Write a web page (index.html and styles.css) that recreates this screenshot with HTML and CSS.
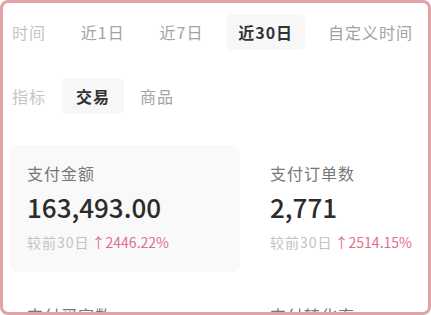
FILE: index.html
```html
<!DOCTYPE html>
<html lang="zh-CN">
<head>
  <meta charset="UTF-8" />
  <meta name="viewport" content="width=device-width, initial-scale=1.0"/>
  <title>交易数据</title>
  <link rel="stylesheet" href="styles.css">
</head>
<body>
  <div class="frame">
    <div class="tabs time-tabs">
      <span class="tab-label">时间</span>
      <span class="tab">近1日</span>
      <span class="tab">近7日</span>
      <span class="tab active">近30日</span>
      <span class="tab">自定义时间</span>
    </div>

    <div class="tabs metric-tabs">
      <span class="tab-label">指标</span>
      <span class="tab active">交易</span>
      <span class="tab">商品</span>
    </div>

    <div class="cards">
      <div class="card selected">
        <div class="card-title">支付金额</div>
        <div class="card-value">163,493.00</div>
        <div class="card-compare">较前30日<span class="up">↑2446.22%</span></div>
      </div>
      <div class="card">
        <div class="card-title">支付订单数</div>
        <div class="card-value">2,771</div>
        <div class="card-compare">较前30日<span class="up">↑2514.15%</span></div>
      </div>
      <div class="card">
        <div class="card-title">支付买家数</div>
        <div class="card-value">2,604</div>
        <div class="card-compare">较前30日<span class="up">↑2380.95%</span></div>
      </div>
      <div class="card">
        <div class="card-title">支付转化率</div>
        <div class="card-value">12.36%</div>
        <div class="card-compare">较前30日<span class="up">↑8.12%</span></div>
      </div>
    </div>
  </div>
</body>
</html>
```

FILE: styles.css
```css
body {
  margin: 0;
  font-family: "Noto Sans CJK SC", "Noto Sans", sans-serif;
  background: #fff;
}
.frame {
  box-sizing: border-box;
  width: 431px;
  height: 315px;
  border: 3px solid #e2a3a6;
  border-radius: 8px;
  overflow: hidden;
  padding: 12px 15px 0 9px;
}
.tabs {
  display: flex;
  align-items: center;
  height: 34px;
  font-size: 16px;
  letter-spacing: 1px;
}
.time-tabs {
  justify-content: space-between;
}
.metric-tabs {
  gap: 30px;
  margin-top: 30px;
}
.tab-label {
  color: #c4c4c4;
}
.tab {
  color: #a3a3a3;
}
.tab.active {
  color: #333;
  font-weight: 700;
  background: #f7f7f7;
  border-radius: 6px;
  padding: 6px 12px;
  margin: 0 -12px;
}
.metric-tabs .tab.active {
  padding: 6px 14px;
  margin: 0 -14px;
}
.cards {
  display: grid;
  grid-template-columns: 230px 230px;
  column-gap: 13px;
  row-gap: 15px;
  margin: 32px 0 0 -2px;
}
.card {
  padding: 17px 17px 20px;
  border-radius: 8px;
  white-space: nowrap;
}
.card.selected {
  background: #f9f9f9;
}
.card-title {
  font-size: 16px;
  line-height: 22px;
  letter-spacing: 1px;
  color: #777;
}
.card-value {
  margin-top: 7px;
  font-size: 26px;
  line-height: 32px;
  font-weight: 500;
  color: #2b2b2b;
}
.card-compare {
  margin-top: 9px;
  font-size: 14px;
  line-height: 20px;
  letter-spacing: 1px;
  color: #c2c2c2;
}
.up {
  color: #e0708a;
  letter-spacing: 0;
  margin-left: 2px;
}
```
